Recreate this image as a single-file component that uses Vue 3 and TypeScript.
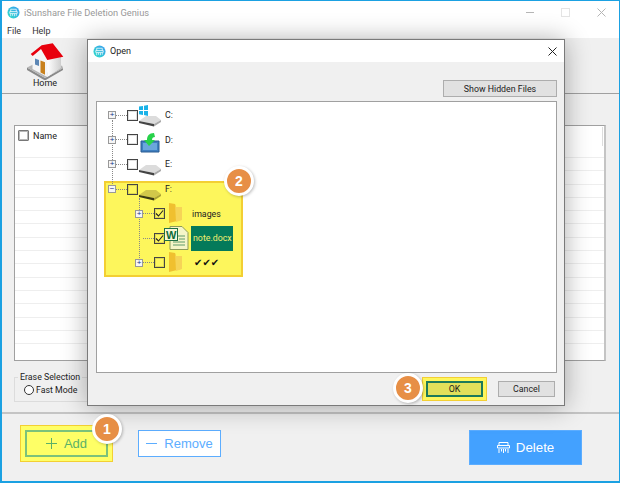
<script setup lang="ts">
interface TreeRow {
  label: string
  level: number
  expander: 'plus' | 'minus' | null
  checked: boolean
  icon: 'win' | 'recovery' | 'drive' | 'driveY' | 'folder' | 'word'
  kind?: 'selected' | 'checks'
}

const rows: TreeRow[] = [
  { label: 'C:', level: 0, expander: 'plus', checked: false, icon: 'win' },
  { label: 'D:', level: 0, expander: 'plus', checked: false, icon: 'recovery' },
  { label: 'E:', level: 0, expander: 'plus', checked: false, icon: 'drive' },
  { label: 'F:', level: 0, expander: 'minus', checked: false, icon: 'driveY' },
  { label: 'images', level: 1, expander: 'plus', checked: true, icon: 'folder' },
  { label: 'note.docx', level: 1, expander: null, checked: true, icon: 'word', kind: 'selected' },
  { label: '✔✔✔', level: 1, expander: 'plus', checked: false, icon: 'folder', kind: 'checks' },
]

const listLines = Array.from({ length: 15 }, (_, i) => i)
</script>

<template>
  <div class="win">
    <div class="titlebar">
      <svg class="app-icon" width="13" height="13" viewBox="0 0 14 14">
        <defs>
          <linearGradient id="appGrad" x1="0" y1="1" x2="1" y2="0">
            <stop offset="0" stop-color="#2fe0c8" />
            <stop offset="1" stop-color="#3a9cf0" />
          </linearGradient>
        </defs>
        <circle cx="7" cy="7" r="6.500" fill="url(#appGrad)" />
        <path d="M4 6V3.500h6V6M3 6h8v2H3zM4 8.500v2.500M6 8.500v2M8 8.500v2.500M10 8.500v2" stroke="#fff" stroke-width=".8" fill="none" />
      </svg>
      <span class="app-title">iSunshare File Deletion Genius</span>
      <div class="win-controls">
        <span class="min"></span>
        <span class="max"></span>
        <svg width="9" height="9" viewBox="0 0 9 9"><path d="M.5.500l8 8M8.500.500l-8 8" stroke="#b5b5b5" fill="none" /></svg>
      </div>
    </div>
    <div class="menubar">
      <span>File</span>
      <span>Help</span>
    </div>
    <div class="toolbar">
      <div class="home">
        <svg width="50" height="40" viewBox="0 0 50 40">
          <defs>
            <linearGradient id="wallGrad" x1="0" y1="0" x2="1" y2="0">
              <stop offset="0" stop-color="#ffffff" />
              <stop offset="1" stop-color="#cfcfcf" />
            </linearGradient>
          </defs>
          <path d="M7 27.500L25 38l18-10v2L25 40.500 7 30z" fill="#8a8a8a" />
          <path d="M7 27.500l6-3 14 8 15-7 1 2.500-18 10z" fill="#b5b5b5" />
          <path d="M12.500 16L21 9l6.300 11v17L12.500 29z" fill="#f5f5f5" />
          <path d="M27.300 20L41 17v11l-13.700 9z" fill="url(#wallGrad)" />
          <path d="M10.700 14L21.700 5.300 32.700 3.300 43.300 16.700 27.300 20 21 9 12.700 16z" fill="#e8000d" />
          <path d="M15 18.500l4 1.500v6l-4-1.500z" fill="#5d87b5" />
          <path d="M20.500 20.500l4.500 1.800v12.500l-4.500-2.300z" fill="#c8811d" />
        </svg>
        <span>Home</span>
      </div>
    </div>
    <div class="main">
      <div class="list">
        <div class="list-head">
          <span class="check"></span>
          <span class="list-name">Name</span>
        </div>
        <div v-for="n in listLines" :key="n" class="list-line"></div>
        <span class="list-scroll"></span>
      </div>
      <fieldset class="erase">
        <legend>Erase Selection</legend>
        <label><span class="radio"></span>Fast Mode</label>
      </fieldset>
    </div>
    <div class="actions">
      <button class="btn btn-add">
        <svg width="11" height="11" viewBox="0 0 11 11"><path d="M5.500 0v11M0 5.500h11" stroke="#5bb168" fill="none" /></svg>
        Add
      </button>
      <button class="btn btn-remove">
        <svg width="11" height="11" viewBox="0 0 11 11"><path d="M0 5.500h11" stroke="#5cadff" fill="none" /></svg>
        Remove
      </button>
      <button class="btn btn-delete">
        <svg width="13" height="13" viewBox="0 0 13 13">
          <path d="M2 4V1.500h9V4M.5 4.500h12v2.500H.5zM2 8v4M4.500 8v2.500M6.500 8v4M8.500 8v2.500M11 8v4" stroke="#fff" fill="none" />
        </svg>
        Delete
      </button>
    </div>

    <div class="dialog">
      <div class="dlg-title">
        <svg width="13" height="13" viewBox="0 0 14 14">
          <circle cx="7" cy="7" r="6.500" fill="url(#appGrad)" />
          <path d="M4 6V3.500h6V6M3 6h8v2H3zM4 8.500v2.500M6 8.500v2M8 8.500v2.500M10 8.500v2" stroke="#fff" stroke-width=".8" fill="none" />
        </svg>
        <span>Open</span>
        <svg class="dlg-close" width="9" height="9" viewBox="0 0 9 9"><path d="M.5.500l8 8M8.500.500l-8 8" stroke="#222" fill="none" /></svg>
      </div>
      <div class="dlg-body">
        <div class="dlg-top">
          <button class="dlg-btn hidden-btn">Show Hidden Files</button>
        </div>
        <div class="tree">
          <div class="tree-hl"></div>
          <div class="vline vline-root"></div>
          <div class="vline vline-child"></div>
          <div v-for="row in rows" :key="row.label" class="tree-row" :class="'lv' + row.level">
            <span class="expander-slot">
              <span v-if="row.expander" class="expander">{{ row.expander === 'plus' ? '+' : '−' }}</span>
            </span>
            <span class="dash"></span>
            <span class="check" :class="{ plain: row.label === 'F:' || row.level === 1 }">
              <svg v-if="row.checked" width="9" height="9" viewBox="0 0 9 9"><path d="M1 4.500l2.500 2.500L8 1.500" stroke="#222" stroke-width="1.100" fill="none" /></svg>
            </span>
            <span class="node-icon">
              <svg v-if="row.icon === 'win' || row.icon === 'drive' || row.icon === 'driveY'" width="24" height="24" viewBox="0 0 24 24">
                <template v-if="row.icon === 'win'">
                  <path d="M1 3.500l4-.6v4H1zM6 2.800L10 2v5H6zM1 7.900h4v4l-4-.6zM6 7.900h4v5l-4-.8z" fill="#19b2e8" />
                </template>
                <path d="M1 18l7-5h10l5 4-7 4z" :fill="row.icon === 'driveY' ? '#d2c84a' : '#dcdcdc'" />
                <path d="M1 18l15 3v2.500L1 20z" :fill="row.icon === 'driveY' ? '#3d3c14' : '#444'" />
                <path d="M16 21l7-4v2l-7 4.500z" :fill="row.icon === 'driveY' ? '#a9a135' : '#aaa'" />
              </svg>
              <svg v-else-if="row.icon === 'recovery'" class="rec" width="20" height="20" viewBox="0 0 20 20">
                <path d="M1 8h18v11H1z" fill="#3f7fc0" stroke="#2a5c92" />
                <path d="M3 10h14v7H3z" fill="#6aa7dc" />
                <path d="M14 0C9 0 7 3 7 7H4l5 6 6-6h-3c0-2 1-3 3-3z" fill="#27d24a" />
              </svg>
              <svg v-else-if="row.icon === 'folder'" class="folder" width="15" height="20" viewBox="0 0 15 20">
                <path d="M1 0l6 1 1 3h5v13L1 20z" fill="#f0c02f" />
                <path d="M7 1l1 18 6-2V4H8z" fill="#f6d457" />
              </svg>
              <svg v-else class="word" width="25" height="24" viewBox="0 0 25 24">
                <path d="M6 .5h12l6 6v17H6z" fill="#f5f5c8" stroke="#8c9a5a" />
                <path d="M9 10h12M15 13h6M9 16h12M9 19h12" stroke="#5f9a6a" />
                <rect x=".5" y="2.500" width="13" height="12" fill="#f7f7d8" stroke="#1f6f45" />
                <text x="2" y="12.500" class="word-w">W</text>
              </svg>
            </span>
            <span class="node-label" :class="row.kind">{{ row.label }}</span>
          </div>
        </div>
        <div class="dlg-bottom">
          <button class="dlg-btn ok-btn">OK</button>
          <button class="dlg-btn cancel-btn">Cancel</button>
        </div>
      </div>
    </div>

    <div class="badge b1">1</div>
    <div class="badge b2">2</div>
    <div class="badge b3">3</div>
  </div>
</template>

<style>
html,
body {
  margin: 0;
  background: #f0f0f0;
}
</style>

<style scoped>
.win {
  position: relative;
  box-sizing: border-box;
  width: 620px;
  height: 483px;
  border: 1px solid #1ba1e2;
  border-bottom-width: 2px;
  border-left-width: 2px;
  background: #f0f0f0;
  display: flex;
  flex-direction: column;
  overflow: hidden;
  font-family: Roboto, "Noto Sans", sans-serif;
  font-size: 9px;
  color: #222;
}
.titlebar {
  height: 23px;
  background: #fff;
  display: flex;
  align-items: center;
  padding-left: 5px;
  gap: 4px;
  color: #999;
  font-size: 9.300px;
}
.win-controls {
  margin-left: auto;
  display: flex;
  align-items: center;
  gap: 27px;
  padding-right: 13px;
}
.min {
  width: 8px;
  height: 1px;
  background: #b5b5b5;
}
.max {
  width: 7px;
  height: 7px;
  border: 1px solid #e4e4e4;
}
.menubar {
  height: 14px;
  background: #fff;
  display: flex;
  align-items: center;
  gap: 11px;
  padding-left: 5px;
  color: #333;
}
.toolbar {
  height: 56px;
  flex: none;
  box-sizing: border-box;
  border-bottom: 1px solid #a0a0a0;
  padding-left: 18px;
}
.home {
  display: inline-flex;
  flex-direction: column;
  align-items: center;
  padding-top: 2px;
  width: 50px;
}
.home span {
  margin-top: -3px;
  line-height: 12px;
  color: #222;
}
.main {
  flex: 1;
  min-height: 0;
  padding: 31px 13px 0 12px;
  border-bottom: 2px solid #c4c4c4;
}
.list {
  position: relative;
  height: 236px;
  border: 1px solid #a0a0a0;
  border-right: 2px solid #c4c4c4;
  background: #fff;
  box-sizing: border-box;
  overflow: hidden;
}
.list-head {
  display: flex;
  gap: 4px;
  padding: 4px 0 0 3px;
  height: 31px;
  box-sizing: border-box;
  align-items: flex-start;
}
.list-name {
  margin-top: 1px;
}
.list-head .check {
  border: 1px solid #777;
  box-shadow: inset 0 0 0 1px #b8b8b8;
  border-radius: 1px;
}
.list-line {
  height: 13.300px;
  box-sizing: border-box;
  border-top: 1px solid #eeeeee;
}
.list-scroll {
  position: absolute;
  right: 1px;
  top: 1px;
  height: 19px;
  width: 1px;
  background: #dddddd;
}
.check {
  box-sizing: border-box;
  width: 11px;
  height: 11px;
  border: 1px solid #444;
  box-shadow: inset 0 0 0 1px rgba(0, 0, 0, 0.12);
  background: #fff;
  display: inline-flex;
  align-items: center;
  justify-content: center;
  flex: none;
}
.check.plain {
  background: transparent;
}
.erase {
  margin: 12px 0 0;
  padding: 4px 0 0 9px;
  width: 90px;
  height: 29px;
  box-sizing: border-box;
  border: 1px solid #dcdcdc;
}
.erase legend {
  padding: 0 2px;
  margin-left: -6px;
  font-size: 8.800px;
  line-height: 8px;
}
.erase label {
  display: flex;
  align-items: center;
  gap: 2px;
  font-size: 8.800px;
}
.radio {
  box-sizing: border-box;
  width: 10px;
  height: 10px;
  border: 1px solid #333;
  border-radius: 50%;
  background: #fff;
}
.actions {
  height: 67px;
  flex: none;
  box-sizing: border-box;
  display: flex;
  align-items: flex-start;
  padding: 16px 0 0 23px;
}
.btn {
  box-sizing: border-box;
  display: flex;
  align-items: center;
  justify-content: center;
  gap: 7px;
  padding: 0;
  font-family: "Liberation Sans", sans-serif;
  font-size: 13px;
  height: 27px;
  width: 83px;
}
.btn-add {
  background: #feff66;
  border: 2px solid #7cc27a;
  color: #5bb168;
  outline: 4px solid #ffff66;
  box-shadow: 0 0 0 5px #f3cf33;
}
.btn-remove {
  margin-left: 30px;
  background: #fff;
  border: 1px solid #5cadff;
  color: #5cadff;
}
.btn-delete {
  margin-left: 248px;
  width: 113px;
  height: 35px;
  gap: 6px;
  background: #43a1ff;
  border: 1px solid #5cadff;
  color: #fff;
  font-size: 13.300px;
}
.dialog {
  position: absolute;
  left: 85px;
  top: 38px;
  width: 478px;
  height: 367px;
  box-sizing: border-box;
  border: 1px solid #7a7a7a;
  background: #f0f0f0;
  box-shadow: 0 1px 24px rgba(0, 0, 0, 0.32);
  display: flex;
  flex-direction: column;
}
.dlg-title {
  height: 22px;
  flex: none;
  background: #fff;
  display: flex;
  align-items: center;
  gap: 4px;
  padding-left: 5px;
  font-size: 9px;
}
.dlg-close {
  margin-left: auto;
  margin-right: 7px;
}
.dlg-body {
  flex: 1;
  display: flex;
  flex-direction: column;
  padding: 0 7px 0 8px;
  min-height: 0;
}
.dlg-top {
  height: 39px;
  flex: none;
  display: flex;
  justify-content: flex-end;
  align-items: flex-end;
  padding-bottom: 4px;
  box-sizing: border-box;
}
.dlg-btn {
  box-sizing: border-box;
  background: #e1e1e1;
  border: 1px solid #adadad;
  font-family: Roboto, "Noto Sans", sans-serif;
  font-size: 8.800px;
  color: #222;
  padding: 0;
}
.hidden-btn {
  width: 114px;
  height: 17px;
}
.tree {
  position: relative;
  height: 272px;
  flex: none;
  box-sizing: border-box;
  border: 1px solid #a0a0a0;
  background: #fff;
  padding-top: 1px;
}
.tree-hl {
  position: absolute;
  left: 7px;
  top: 79px;
  width: 139px;
  height: 96px;
  box-sizing: border-box;
  background: #fdf65c;
  border: 2px solid #f3cf33;
}
.vline {
  position: absolute;
  border-left: 1px dotted #888;
}
.vline-root {
  left: 15px;
  top: 18px;
  height: 66px;
}
.vline-child {
  left: 42px;
  top: 96px;
  height: 66px;
}
.tree-row {
  position: relative;
  height: 24.600px;
  display: flex;
  align-items: center;
}
.tree-row.lv0 {
  padding-left: 11px;
}
.tree-row.lv1 {
  padding-left: 38px;
}
.expander-slot {
  width: 8px;
  height: 8px;
  flex: none;
}
.expander {
  box-sizing: border-box;
  display: flex;
  align-items: center;
  justify-content: center;
  width: 8px;
  height: 8px;
  border: 1px solid #999;
  background: #f6f6f6;
  color: #20308a;
  font-size: 8px;
  line-height: 6px;
  font-family: "Liberation Sans", sans-serif;
}
.dash {
  width: 11px;
  flex: none;
  border-top: 1px dotted #888;
}
.node-icon {
  position: relative;
  width: 24px;
  height: 24px;
  flex: none;
  display: flex;
  align-items: center;
}
.rec {
  margin-left: 2px;
  margin-top: 6px;
}
.folder {
  margin-left: 3px;
  margin-top: -1px;
}
.word {
  margin-left: -1px;
}
.node-label {
  font-size: 8.800px;
  margin-left: 3px;
  color: #222;
}
.node-label.selected {
  margin-left: 2px;
  background: #047a5a;
  color: #f4ee70;
  padding: 6px 1px 6px 2px;
  line-height: 13px;
}
.node-label.checks {
  font-family: "DejaVu Sans", sans-serif;
  font-size: 10px;
  color: #111;
  margin-left: 5px;
}
.word-w {
  font-family: "Liberation Sans", sans-serif;
  font-size: 11px;
  font-weight: 700;
  fill: #0d6b3a;
}
.dlg-bottom {
  flex: 1;
  display: flex;
  align-items: center;
  justify-content: flex-end;
  gap: 15px;
  padding-right: 2px;
}
.ok-btn,
.cancel-btn {
  width: 57px;
  height: 16px;
}
.ok-btn {
  background: #e2e05a;
  border: 2px solid #1d7a5a;
  outline: 3px solid #fdf65c;
  box-shadow: 0 0 0 4px #f3cf33;
}
.badge {
  position: absolute;
  box-sizing: border-box;
  width: 30px;
  height: 30px;
  border-radius: 50%;
  background: #e78f46;
  border: 3px solid #fff;
  box-shadow: 1px 1px 3px rgba(0, 0, 0, 0.25);
  color: #fff;
  font-family: "Liberation Sans", sans-serif;
  font-weight: 700;
  font-size: 14px;
  display: flex;
  align-items: center;
  justify-content: center;
}
.b1 {
  left: 90px;
  top: 413px;
}
.b2 {
  left: 222px;
  top: 165px;
}
.b3 {
  left: 391px;
  top: 372px;
}
</style>
